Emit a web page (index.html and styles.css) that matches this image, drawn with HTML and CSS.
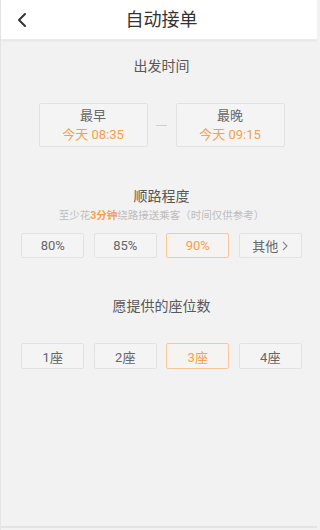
FILE: index.html
```html
<!DOCTYPE html>
<html lang="zh">
<head>
<meta charset="utf-8">
<title>自动接单</title>
<link rel="stylesheet" href="styles.css">
</head>
<body>
<div class="page">
  <header class="topbar">
    <span class="back">
      <svg width="12" height="16" viewBox="0 0 12 16"><path d="M9 2 L3 8 L9 14" fill="none" stroke="#333" stroke-width="2" stroke-linecap="round" stroke-linejoin="round"/></svg>
    </span>
    <h1 class="title">自动接单</h1>
  </header>
  <main class="content">
    <section class="sec sec-time">
      <div class="sec-title">出发时间</div>
      <div class="time-row">
        <div class="time-box">
          <div class="time-label">最早</div>
          <div class="time-val">今天 08:35</div>
        </div>
        <span class="dash"></span>
        <div class="time-box">
          <div class="time-label">最晚</div>
          <div class="time-val">今天 09:15</div>
        </div>
      </div>
    </section>
    <section class="sec sec-route">
      <div class="sec-title">顺路程度</div>
      <div class="hint">至少花<span class="hl">3分钟</span>绕路接送乘客（时间仅供参考）</div>
      <div class="opts">
        <div class="opt">80%</div>
        <div class="opt">85%</div>
        <div class="opt on">90%</div>
        <div class="opt">其他<svg class="chev" width="6" height="10" viewBox="0 0 6 10"><path d="M1 1 L5 5 L1 9" fill="none" stroke="#888" stroke-width="1.1"/></svg></div>
      </div>
    </section>
    <section class="sec sec-seat">
      <div class="sec-title">愿提供的座位数</div>
      <div class="opts opts-seat">
        <div class="opt">1座</div>
        <div class="opt">2座</div>
        <div class="opt on">3座</div>
        <div class="opt">4座</div>
      </div>
    </section>
  </main>
  <div class="bottom-line"></div>
</div>
</body>
</html>
```
FILE: styles.css
```css
html, body {
  margin: 0;
  padding: 0;
  overflow: hidden;
  background: #f2f2f2;
}
body {
  width: 317px;
  height: 530px;
  font-family: "Roboto", "Noto Sans CJK SC", sans-serif;
}
.page {
  width: 322px;
  height: 530px;
  display: flex;
  flex-direction: column;
  border-left: 1px solid #e6e6e6;
  box-sizing: border-box;
}
.topbar {
  height: 39px;
  flex: none;
  background: #fff;
  display: flex;
  align-items: center;
  justify-content: center;
  position: relative;
  box-shadow: 0 1px 2px rgba(0,0,0,0.06);
  border-bottom: 1px solid #ececec;
}
.back {
  position: absolute;
  left: 15px;
  top: 12px;
  display: flex;
}
.title {
  margin: 0;
  font-size: 18px;
  font-weight: 400;
  color: #333;
  line-height: 1;
}
.content {
  flex: 1;
  display: flex;
  flex-direction: column;
}
.sec {
  display: flex;
  flex-direction: column;
  align-items: center;
}
.sec-title {
  font-size: 14px;
  color: #585858;
  line-height: 20px;
}
.sec-time { padding-top: 16px; }
.time-row {
  margin-top: 27px;
  display: flex;
  align-items: center;
}
.time-box {
  width: 109px;
  height: 44px;
  box-sizing: border-box;
  border: 1px solid #e2e2e2;
  border-radius: 2px;
  background: #f4f4f4;
  display: flex;
  flex-direction: column;
  align-items: center;
  justify-content: center;
  gap: 2px;
}
.time-label {
  font-size: 13px;
  color: #666;
  line-height: 17px;
}
.time-val {
  font-size: 13px;
  color: #f5a04c;
  line-height: 17px;
}
.dash {
  width: 11px;
  height: 1px;
  background: #cfcfcf;
  margin: 0 9px 0 8px;
}
.sec-route { padding-top: 39px; }
.hint {
  margin-top: 3px;
  font-size: 10.5px;
  color: #bdbdbd;
  line-height: 14px;
}
.hl {
  color: #f5a04c;
  font-weight: 700;
}
.opts {
  margin-top: 10px;
  display: flex;
  gap: 9.5px;
}
.opt {
  width: 63px;
  height: 25px;
  box-sizing: border-box;
  border: 1px solid #e2e2e2;
  border-radius: 2px;
  background: #f4f4f4;
  display: flex;
  align-items: center;
  justify-content: center;
  font-size: 13px;
  color: #666;
}
.opt.on {
  border-color: #f8c89a;
  color: #f5a04c;
  background: #f6f4f2;
}
.chev { margin-left: 4px; }
.sec-seat { padding-top: 38px; }
.opts-seat { margin-top: 27px; }
.opts-seat .opt { height: 26px; }
.bottom-line {
  height: 2px;
  background: #e4e4e4;
  margin-bottom: 2px;
  flex: none;
}
```
